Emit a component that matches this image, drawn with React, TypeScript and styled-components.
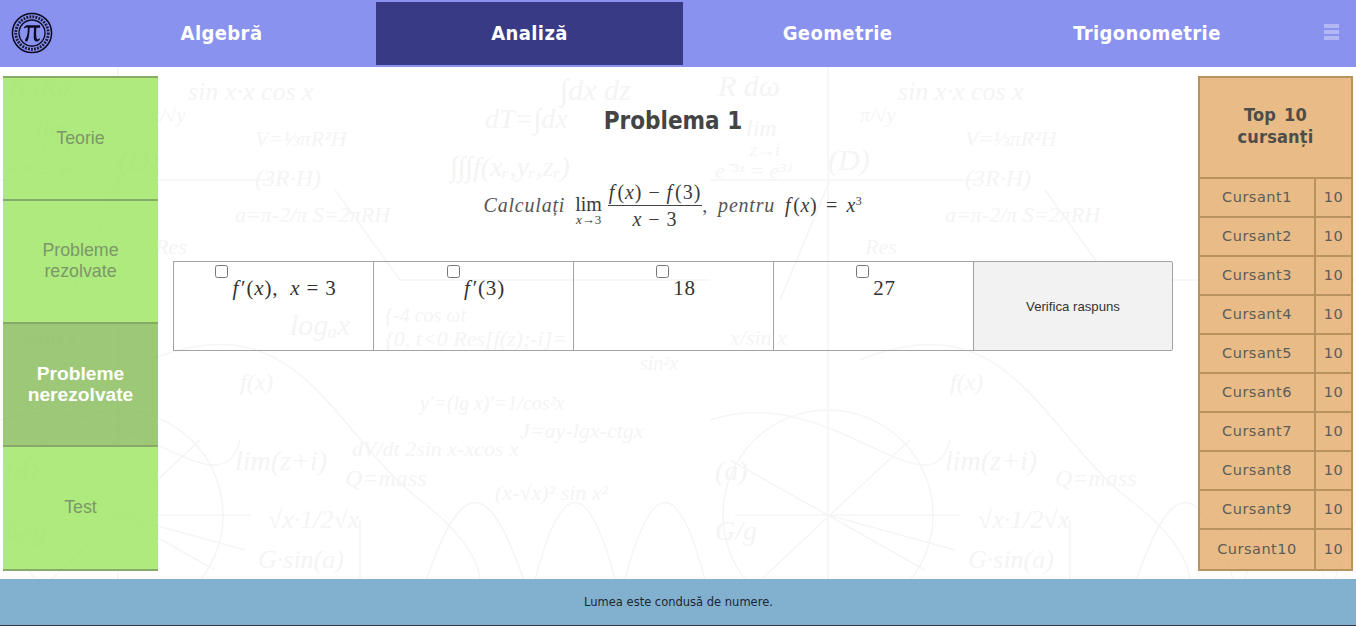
import React from 'react'

import styled, { createGlobalStyle } from 'styled-components'

/**********************************************************************/

const GlobalStyle = createGlobalStyle`
  html, body {
    margin: 0;
    padding: 0;
    height: 100%;
    background: #fff;
    overflow: hidden;
  }
  * {
    box-sizing: border-box;
  }
`

const Page = styled.div`
  position: relative;
  display: flex;
  flex-direction: column;
  height: 626px;
  font-family: 'DejaVu Sans', Verdana, sans-serif;
`

const Doodles = styled.svg`
  position: absolute;
  top: 0;
  left: 0;
  width: 1356px;
  height: 626px;
  z-index: 0;

  text {
    font-family: 'Liberation Serif', serif;
    font-style: italic;
    fill: #f4f4f4;
  }
  path, line, circle {
    fill: none;
    stroke: #f5f5f5;
    stroke-width: 1.5;
  }
`

/**********************************************************************/

const Header = styled.header`
  position: relative;
  z-index: 1;
  display: flex;
  align-items: stretch;
  height: 67px;
  padding: 2px 0;
  background: #8a92f0;
`

const LogoBox = styled.div`
  display: flex;
  align-items: center;
  width: 68px;
  padding-left: 11px;
  margin-bottom: 2px;
`

const NavItem = styled.a<{ $active?: boolean }>`
  display: flex;
  align-items: center;
  justify-content: center;
  width: 307px;
  margin-right: 1px;
  padding-bottom: 2px;
  font-family: 'DejaVu Sans Condensed', 'DejaVu Sans', sans-serif;
  font-size: 20px;
  font-weight: bold;
  letter-spacing: 0.4px;
  color: #fff;
  background: ${(p) => (p.$active ? '#383a85' : 'transparent')};

  &:last-of-type {
    padding-left: 3px;
  }
`

const Burger = styled.div`
  display: flex;
  flex-direction: column;
  gap: 2px;
  width: 15px;
  margin: 22px 0 0 24px;

  span {
    height: 4px;
    background: #b3b8f5;
  }
`

const Middle = styled.div`
  position: relative;
  z-index: 1;
  flex: 1;
  display: flex;
  align-items: flex-start;
  padding: 9px 3px 0 3px;
`

const Sidebar = styled.nav`
  display: flex;
  flex-direction: column;
  width: 155px;
  height: 495px;
  border-bottom: 2px solid #87a96a;
`

const SideItem = styled.a<{ $active?: boolean }>`
  flex: 0 0 123px;
  display: flex;
  align-items: center;
  justify-content: center;
  padding-bottom: 1px;
  border-top: 2px solid #87a96a;
  text-align: center;
  font-family: 'Liberation Sans', Arial, sans-serif;
  font-size: ${(p) => (p.$active ? '19.2px' : '17.8px')};
  font-weight: ${(p) => (p.$active ? 'bold' : 'normal')};
  line-height: 21px;
  color: ${(p) => (p.$active ? '#fff' : '#7c9868')};
  background: ${(p) =>
    p.$active ? 'rgba(130, 185, 82, 0.78)' : 'rgba(154, 229, 92, 0.8)'};

  &:last-child {
    flex: 1;
  }
`

const Main = styled.main`
  flex: 1;
  padding: 0 25px 0 15px;
`

const Title = styled.h1`
  margin: 30px 0 0;
  text-align: center;
  font-family: 'DejaVu Sans Condensed', 'DejaVu Sans', sans-serif;
  font-size: 24px;
  line-height: 30px;
  font-weight: bold;
  color: #444;
`

const Formula = styled.div`
  display: flex;
  align-items: center;
  justify-content: center;
  height: 60px;
  margin-top: 39px;
  font-family: 'Liberation Serif', 'Times New Roman', serif;
  font-size: 20px;
  letter-spacing: 0.6px;
  word-spacing: 3px;
  color: #3a3a3a;
  white-space: pre;
`

const Word = styled.i`
  margin-right: 10px;
  letter-spacing: 0.8px;
  color: #555;
`

const Fn = styled.i`
  margin-right: 2px;
`

const Limit = styled.span`
  display: inline-flex;
  flex-direction: column;
  align-items: center;
  margin: 0 6px 0 0;
  padding-top: 11px;
  line-height: 19px;
  letter-spacing: 0;

  small {
    font-size: 13px;
    line-height: 12px;
  }
`

const Fraction = styled.span`
  display: inline-flex;
  flex-direction: column;
  align-items: center;
  line-height: 26px;
  letter-spacing: 0.95px;
  word-spacing: 0;

  span:first-child {
    padding: 0 1px;
    border-bottom: 1px solid #444;
  }
`

const Super = styled.sup`
  font-size: 12px;
  line-height: 0;
  margin-bottom: 8px;
`

const Options = styled.div`
  display: flex;
  height: 90px;
  margin-top: 26px;
`

const Option = styled.label`
  flex: 0 0 201px;
  display: flex;
  justify-content: center;
  align-items: flex-start;
  padding-left: 5px;
  border: 1px solid #a3a3a3;
  margin-right: -1px;
  font-family: 'Liberation Serif', 'Times New Roman', serif;
  font-size: 21px;
  letter-spacing: 0.8px;
  color: #333;
  white-space: pre;

  input {
    width: 13px;
    height: 13px;
    margin: 3px 4px 0 0;
  }
  span {
    margin-top: 14px;
    line-height: 24px;
  }
`

const CheckButton = styled.button`
  flex: 0 0 200px;
  border: 1px solid #a3a3a3;
  border-radius: 2px;
  background: rgba(240, 240, 240, 0.88);
  font-family: 'Liberation Sans', Arial, sans-serif;
  font-size: 13.2px;
  color: #333;
`

const Board = styled.aside`
  display: grid;
  grid-template-columns: 1fr 37px;
  grid-template-rows: 99px repeat(9, 39px) 1fr;
  width: 155px;
  height: 495px;
  border: 2px solid #b8925f;
  background: rgba(226, 170, 105, 0.8);
  color: #5d5d58;
`

const BoardTitle = styled.h2`
  grid-column: 1 / 3;
  display: flex;
  align-items: center;
  justify-content: center;
  margin: 0;
  padding-bottom: 4px;
  text-align: center;
  font-family: 'DejaVu Sans Condensed', 'DejaVu Sans', sans-serif;
  font-size: 18px;
  line-height: 22px;
  font-weight: bold;
  letter-spacing: 0.2px;
  word-spacing: 2px;
  color: #4d4d4a;
`

const BoardCell = styled.div<{ $score?: boolean }>`
  display: flex;
  align-items: center;
  justify-content: center;
  padding-bottom: 1px;
  border-top: 2px solid #b8925f;
  border-left: ${(p) => (p.$score ? '2px solid #b8925f' : 'none')};
  font-size: 14.5px;
  letter-spacing: 0.5px;
`

const Footer = styled.footer`
  position: relative;
  z-index: 1;
  height: 47px;
  padding-left: 1px;
  display: flex;
  align-items: center;
  justify-content: center;
  background: #82b0cf;
  border-bottom: 1px solid #33334f;
  font-size: 11.5px;
  color: #1d2730;
`

/**********************************************************************/

const doodleTexts: [number, number, number, string][] = [
  [8, 96, 30, 'R dω'],
  [188, 100, 26, 'sin x·x cos x'],
  [36, 136, 24, 'lim'],
  [40, 156, 18, 'z→i'],
  [150, 122, 20, 'π/√y'],
  [255, 146, 22, 'V=⅓πR²H'],
  [255, 186, 24, '(3R·H)'],
  [118, 170, 30, '(D)'],
  [5, 178, 22, 'e⁻³ᶻ = e³ⁱ'],
  [235, 222, 22, 'a=π-2/π   S=2πRH'],
  [155, 254, 22, 'Res'],
  [290, 335, 30, 'logₐx'],
  [385, 322, 20, '{-4 cos ωt'],
  [385, 346, 22, '{0, t<0  Res[f(z);-i]='],
  [450, 176, 28, '∫∫∫f(xᵣ,yᵣ,zᵣ)'],
  [485, 128, 28, 'dT=∫dx'],
  [560, 100, 30, '∫dx dz'],
  [20, 345, 22, 'x/sin x'],
  [640, 370, 20, 'sin²x'],
  [420, 410, 20, 'y′=(lg x)′=1/cos²x'],
  [240, 390, 24, 'f(x)'],
  [520, 438, 22, 'J=ay-lgx-ctgx'],
  [235, 470, 28, 'lim(z+i)'],
  [345, 486, 24, 'Q=mass'],
  [352, 456, 22, 'dV/dt  2sin x-xcos x'],
  [258, 568, 26, 'G·sin(a)'],
  [268, 528, 26, '√x·1/2√x'],
  [5, 540, 28, 'G/g'],
  [5, 480, 28, '(a)'],
  [495, 500, 22, '(x-√x)²  sin x²'],
]

const DoodleTile: React.FC<{ offset: number }> = ({ offset }) => (
  <g transform={`translate(${offset} 0)`}>
    {doodleTexts
      .filter(([x, , size, label]) => offset + x + size * label.length * 0.5 < 1190)
      .map(([x, y, size, label]) => (
        <text key={label} x={x} y={y} fontSize={size}>
          {label}
        </text>
      ))}
    <circle cx={118} cy={515} r={105} />
    <line x1={25} y1={515} x2={250} y2={515} />
    <line x1={118} y1={67} x2={118} y2={626} />
    <line x1={20} y1={460} x2={215} y2={570} />
    <line x1={40} y1={590} x2={200} y2={440} />
    <line x1={118} y1={515} x2={245} y2={550} />
    <path d="M0 180 H270" />
    <path d="M120 180 L70 300" />
    <path d="M335 190 L400 280 H710" />
    <path d="M150 360 C300 300 330 430 420 500 S 470 600 480 626" />
    <path d="M0 420 C120 380 220 520 240 440" />
    <path d="M420 600 C460 470 490 470 530 600 C560 470 590 470 620 600 C650 470 680 470 710 600" />
    <path d="M360 520 V626" />
  </g>
)

const PiLogo: React.FC = () => (
  <svg width="42" height="42" viewBox="0 0 44 44">
    <circle cx="22" cy="22" r="20.5" fill="none" stroke="#0a0a20" strokeWidth="1.6" />
    <circle
      cx="22"
      cy="22"
      r="17"
      fill="none"
      stroke="#1a1a3a"
      strokeWidth="3"
      strokeDasharray="2 1.2"
    />
    <circle cx="22" cy="22" r="13.6" fill="none" stroke="#0a0a20" strokeWidth="1.4" />
    <path
      d="M13.5 16.5 C14.5 14.6 16 14 18 14 H30.5 V16.4 H26.6 C26.3 20 26.2 24 26.7 27 C27 29 28.6 29.2 29.8 27.6 L30.4 28.2 C29.2 30.6 27.6 31.2 26.2 30.8 C24.2 30.2 23.8 28 23.8 25.6 C23.8 22.4 24 19.4 24.2 16.4 H19.6 C19.4 20.6 19 26.6 17.4 30 C16.8 31.2 15.2 31.2 14.8 30 C14.6 28.6 15.8 27.6 16.4 26 C17.4 23 17.6 19.4 17.6 16.4 C15.8 16.2 14.8 16.6 14 17.4 Z"
      fill="#0a0a20"
    />
  </svg>
)

const sideItems: [string, boolean][] = [
  ['Teorie', false],
  ['Probleme rezolvate', false],
  ['Probleme nerezolvate', true],
  ['Test', false],
]

const students = Array.from({ length: 10 }, (_, i) => `Cursant${i + 1}`)

/**********************************************************************/

const App: React.FC = () => {
  return (
    <Page>
      <GlobalStyle />
      <Doodles viewBox="0 0 1356 626">
        <DoodleTile offset={0} />
        <DoodleTile offset={710} />
      </Doodles>

      <Header>
        <LogoBox>
          <PiLogo />
        </LogoBox>
        <NavItem>Algebră</NavItem>
        <NavItem $active>Analiză</NavItem>
        <NavItem>Geometrie</NavItem>
        <NavItem>Trigonometrie</NavItem>
        <Burger>
          <span />
          <span />
          <span />
        </Burger>
      </Header>

      <Middle>
        <Sidebar>
          {sideItems.map(([label, active]) => (
            <SideItem key={label} $active={active}>
              {label === 'Teorie' || label === 'Test' ? (
                label
              ) : (
                <span>
                  {label.split(' ')[0]}
                  <br />
                  {label.split(' ')[1]}
                </span>
              )}
            </SideItem>
          ))}
        </Sidebar>

        <Main>
          <Title>Problema 1</Title>
          <Formula>
            <Word>Calculați</Word>
            <Limit>
              lim
              <small>
                <i>x</i>→3
              </small>
            </Limit>
            <Fraction>
              <span>
                <Fn>f</Fn>(<i>x</i>) − <Fn>f</Fn>(3)
              </span>
              <span>
                <i>x</i> − 3
              </span>
            </Fraction>
            <Word as="span">,</Word>
            <Word>pentru</Word>
            <Fn>f</Fn>
            <span>(</span>
            <i>x</i>
            <span>) = </span>
            <i>x</i>
            <Super>3</Super>
          </Formula>
          <Options>
            <Option>
              <input type="checkbox" />
              <span>
                <Fn>f</Fn>′(<i>x</i>),{'  '}
                <i>x</i> = 3
              </span>
            </Option>
            <Option>
              <input type="checkbox" />
              <span>
                <Fn>f</Fn>′(3)
              </span>
            </Option>
            <Option>
              <input type="checkbox" />
              <span>18</span>
            </Option>
            <Option>
              <input type="checkbox" />
              <span>27</span>
            </Option>
            <CheckButton>Verifica raspuns</CheckButton>
          </Options>
        </Main>

        <Board>
          <BoardTitle>
            <span>
              Top 10
              <br />
              cursanți
            </span>
          </BoardTitle>
          {students.map((name) => (
            <React.Fragment key={name}>
              <BoardCell>{name}</BoardCell>
              <BoardCell $score>10</BoardCell>
            </React.Fragment>
          ))}
        </Board>
      </Middle>

      <Footer>Lumea este condusă de numere.</Footer>
    </Page>
  )
}

export default App
